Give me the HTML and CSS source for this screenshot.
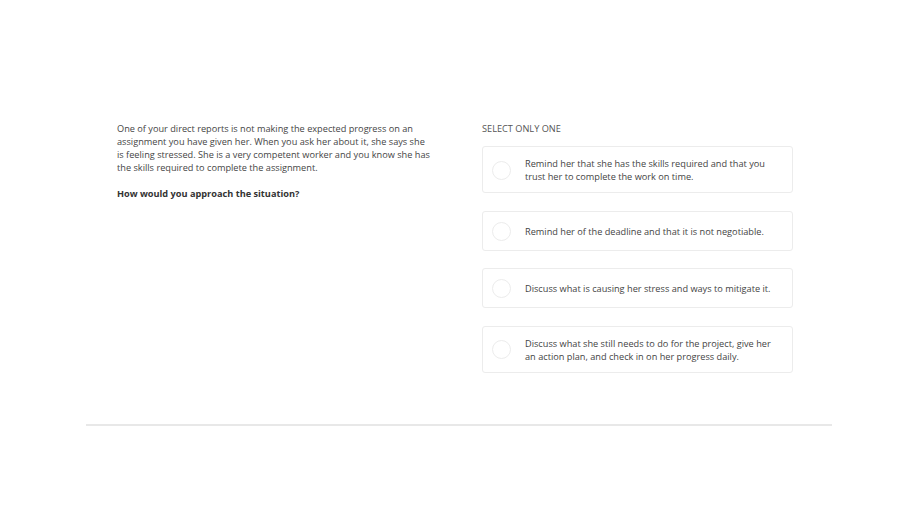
FILE: index.html
```html
<!DOCTYPE html>
<html>
<head>
<meta charset="utf-8">
<link rel="stylesheet" href="styles.css">
</head>
<body>
<div class="page">
  <div class="quiz">
    <div class="prompt">
      <p class="scenario">One of your direct reports is not making the expected progress on an assignment you have given her. When you ask her about it, she says she is feeling stressed. She is a very competent worker and you know she has the skills required to complete the assignment.</p>
      <p class="question">How would you approach the situation?</p>
    </div>
    <div class="answers">
      <div class="label">SELECT ONLY ONE</div>
      <div class="options">
        <div class="option"><span class="radio"></span><span class="opt-text">Remind her that she has the skills required and that you trust her to complete the work on time.</span></div>
        <div class="option"><span class="radio"></span><span class="opt-text">Remind her of the deadline and that it is not negotiable.</span></div>
        <div class="option"><span class="radio"></span><span class="opt-text">Discuss what is causing her stress and ways to mitigate it.</span></div>
        <div class="option"><span class="radio"></span><span class="opt-text">Discuss what she still needs to do for the project, give her an action plan, and check in on her progress daily.</span></div>
      </div>
    </div>
  </div>
  <div class="rule"></div>
</div>
</body>
</html>
```
FILE: styles.css
```css
html, body {
  margin: 0;
  padding: 0;
  background: #ffffff;
}
body {
  font-family: "Open Sans", "Liberation Sans", sans-serif;
  font-size: 9.2px;
  line-height: 13px;
  color: #454545;
}
.page {
  padding-top: 122px;
}
.quiz {
  display: flex;
  padding-left: 117px;
}
.prompt {
  width: 316px;
}
.prompt p {
  margin: 0;
}
.scenario {
  margin-bottom: 13px !important;
}
.question {
  font-weight: 700;
  color: #333;
}
.answers {
  margin-left: 49px;
  width: 311px;
}
.label {
  color: #555;
  margin-bottom: 11px;
}
.options {
  display: flex;
  flex-direction: column;
  gap: 17.67px;
}
.option {
  display: flex;
  align-items: center;
  border: 1px solid #ececec;
  border-radius: 3px;
  padding: 10px 20px 9px 9px;
  min-height: 19px;
}
.radio {
  flex: none;
  width: 17px;
  height: 17px;
  border: 1px solid #ececec;
  border-radius: 50%;
  margin-right: 14px;
}
.opt-text {
  color: #444;
}
.rule {
  margin: 51px 0 0 86px;
  width: 746px;
  height: 2px;
  background: #e8e8e8;
}
```
